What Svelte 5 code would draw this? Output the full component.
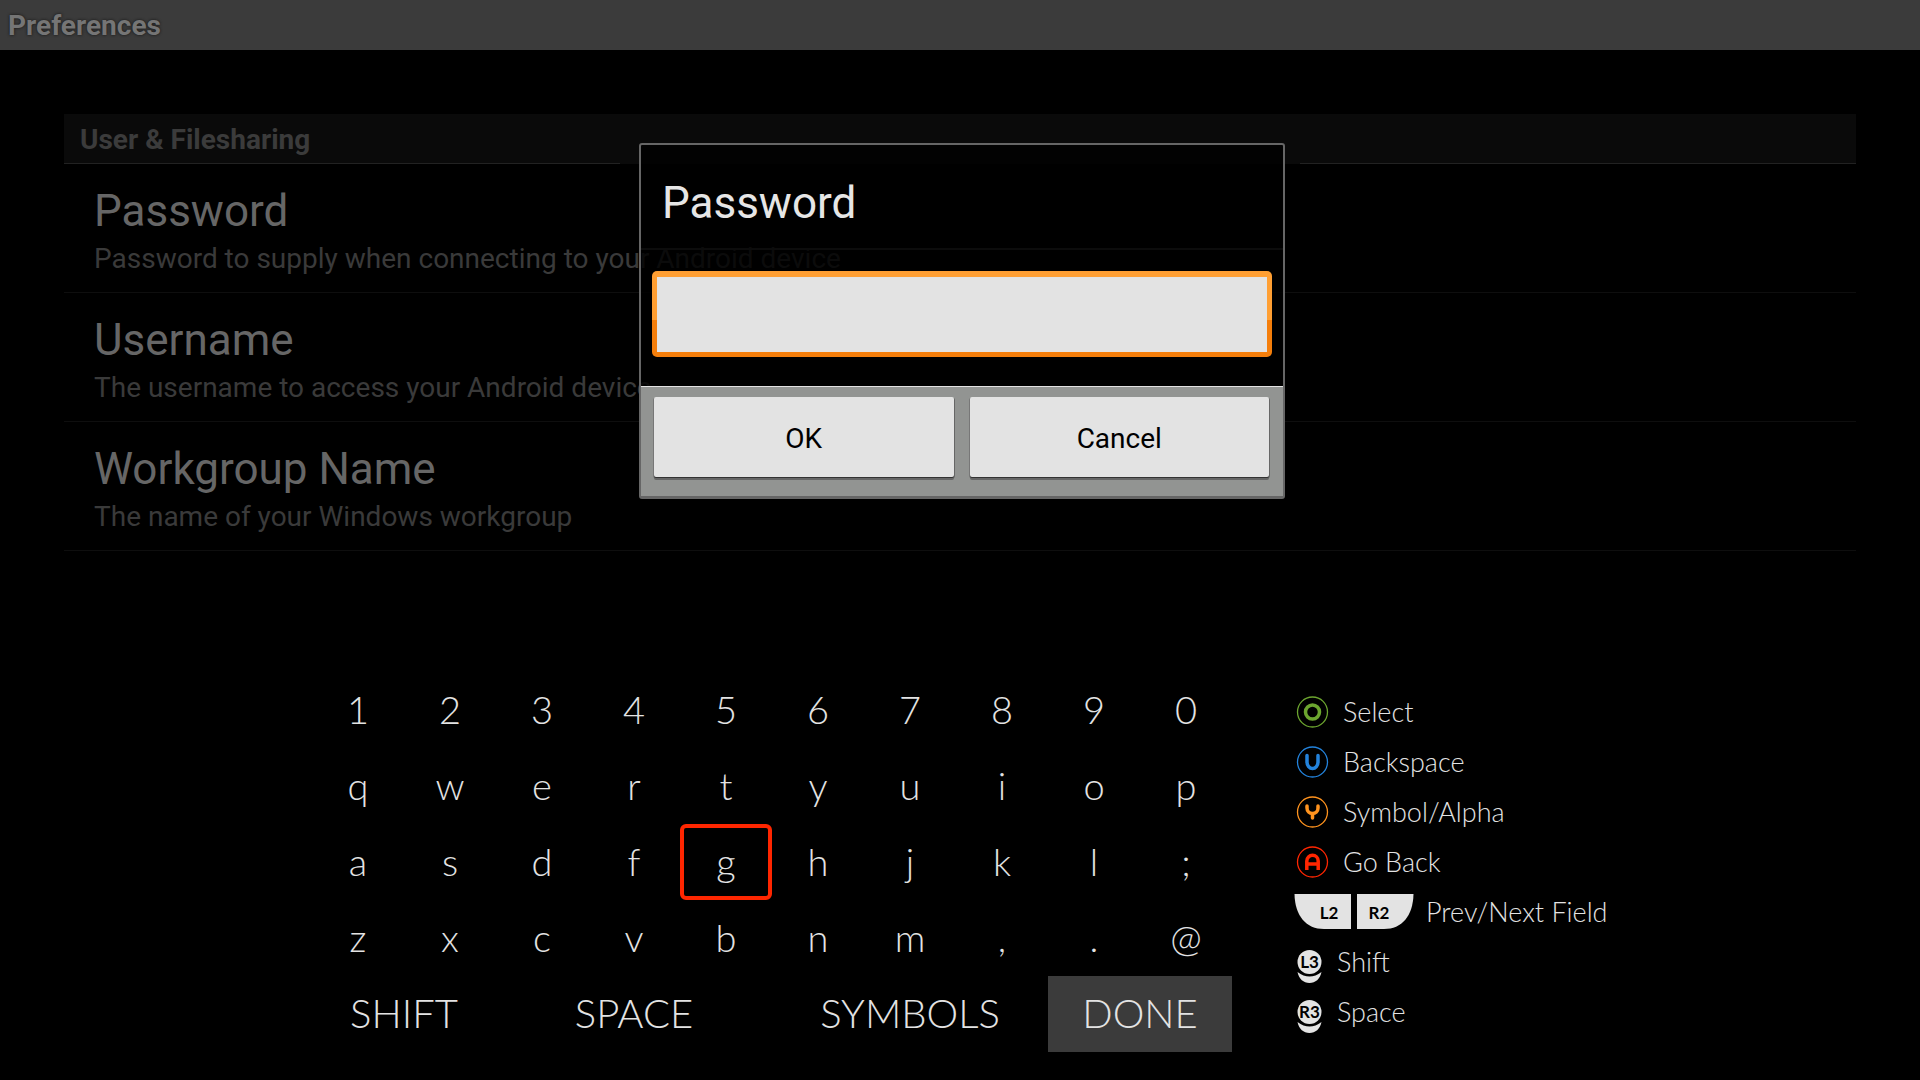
<script>
  const preferences = [
    { title: 'Password', summary: 'Password to supply when connecting to your Android device' },
    { title: 'Username', summary: 'The username to access your Android device' },
    { title: 'Workgroup Name', summary: 'The name of your Windows workgroup' }
  ];
  const keys = [...'1234567890', ...'qwertyuiop', ...'asdfghjkl;', ...'zxcvbnm,.@'];
  const actions = [
    { label: 'SHIFT' },
    { label: 'SPACE', wide: true },
    { label: 'SYMBOLS', wide: true },
    { label: 'DONE', filled: true }
  ];
  const hints = [
    { icon: 'o', label: 'Select' },
    { icon: 'u', label: 'Backspace' },
    { icon: 'y', label: 'Symbol/Alpha' },
    { icon: 'a', label: 'Go Back' },
    { icon: 'triggers', label: 'Prev/Next Field' },
    { icon: 'stick', text: 'L3', label: 'Shift' },
    { icon: 'stick', text: 'R3', label: 'Space' }
  ];

  let password = $state('');
  let selected = $state('g');
</script>

<div class="screen">
  <header class="bar">Preferences</header>

  <main class="prefs">
    <h2>User &amp; Filesharing</h2>
    {#each preferences as pref}
      <button class="pref" type="button">
        <span class="pref-title">{pref.title}</span>
        <span class="pref-summary">{pref.summary}</span>
      </button>
    {/each}
  </main>

  <section class="input-method">
    <div class="keyboard">
      {#each keys as key}
        <button class="key" class:selected={key === selected} type="button" onclick={() => (selected = key)}>{key}</button>
      {/each}
      {#each actions as action}
        <button class="key action" class:wide={action.wide} class:filled={action.filled} type="button">{action.label}</button>
      {/each}
    </div>

    <ul class="hints">
      {#each hints as hint}
        <li>
          {#if hint.icon === 'triggers'}
            <svg width="120" height="36" viewBox="0 0 120 36">
              <path fill="#e3e3e3" d="M0.500 0H57V35H30C12 35 1 22 0.500 0Z" />
              <path fill="#e3e3e3" d="M119.500 0H63V35H90C108 35 119 22 119.500 0Z" />
              <text x="35" y="25" class="cap">L2</text>
              <text x="85" y="25" class="cap">R2</text>
            </svg>
          {:else if hint.icon === 'stick'}
            <svg width="31" height="42" viewBox="0 -7 31 42">
              <circle cx="15.5" cy="14" r="12" fill="#e3e3e3" />
              <path fill="#e3e3e3" d="M3.5 24Q15.5 33 27.500 24C26 31 21.500 35 15.500 35S5 31 3.500 24Z" />
              <text x="15.5" y="20" class="cap">{hint.text}</text>
            </svg>
          {:else}
            <svg class={hint.icon} width="37" height="36" viewBox="0 0 37 36" fill="none" stroke="currentColor">
              <circle cx="18.500" cy="18" r="15" stroke-width="1.300" />
              {#if hint.icon === 'o'}
                <circle cx="18.500" cy="18" r="7" stroke-width="3.500" />
              {:else if hint.icon === 'u'}
                <path stroke-width="3.500" stroke-linecap="round" d="M13 11.500V18a5.500 6.500 0 0 0 11 0V11.500" />
              {:else if hint.icon === 'y'}
                <path stroke-width="3.500" stroke-linecap="round" d="M13 12V14a5.500 5.500 0 0 0 11 0V12M18.500 20V24" />
              {:else}
                <path stroke-width="3.500" d="M12.800 26V17a5.700 5.700 0 0 1 11.400 0V26M12.800 20H24.200" />
              {/if}
            </svg>
          {/if}
          <span>{hint.label}</span>
        </li>
      {/each}
    </ul>
  </section>

  <div class="overlay">
    <form class="dialog" role="dialog" aria-labelledby="dialog-title" onsubmit={(e) => e.preventDefault()}>
      <label id="dialog-title" for="password">Password</label>
      <div class="field">
        <input id="password" type="password" bind:value={password} />
      </div>
      <div class="buttons">
        <button type="submit">OK</button>
        <button type="button">Cancel</button>
      </div>
    </form>
  </div>
</div>

<style>
  :global(body) {
    background: #000;
  }

  .screen,
  .screen * {
    box-sizing: border-box;
  }

  .screen {
    position: relative;
    display: flex;
    flex-direction: column;
    min-height: 100vh;
    background: #000;
    font-family: Roboto, 'Liberation Sans', sans-serif;
  }

  button {
    margin: 0;
    border: 0;
    padding: 0;
    background: none;
    font-family: inherit;
    cursor: pointer;
  }

  .bar {
    padding: 9px 8px 8px;
    background: #3b3b3b;
    color: #757575;
    font-size: 28px;
    font-weight: 700;
    line-height: 33px;
    text-shadow: 0 0 3px #111;
  }

  .prefs {
    display: flex;
    flex-direction: column;
    margin: 64px 64px 0;
  }

  h2 {
    margin: 0;
    padding: 9px 16px 0;
    background: #0a0a0a;
    color: #3b3b3b;
    font-size: 28px;
    font-weight: 700;
    line-height: 33px;
  }

  h2::after {
    content: '';
    display: block;
    height: 1px;
    margin: 7px -16px 0;
    background: linear-gradient(90deg, #222 31%, transparent 31%, transparent 69%, #222 69%);
  }

  .pref {
    display: flex;
    flex-direction: column;
    border-bottom: 1px solid #0e0e0e;
    padding: 21px 30px 17px;
    text-align: left;
  }

  .pref-title {
    color: #666;
    font-size: 44px;
    line-height: 52px;
  }

  .pref-summary {
    margin-top: 5px;
    color: #3a3a3a;
    font-size: 28px;
    line-height: 33px;
  }

  .input-method {
    display: flex;
    justify-content: center;
    gap: 62px;
    margin-top: auto;
    padding: 48px 48px 28px;
    color: #e3e3e3;
    font-family: Lato, 'Open Sans', sans-serif;
    font-weight: 300;
  }

  .keyboard {
    display: grid;
    grid-template-columns: repeat(10, 92px);
    grid-auto-rows: 76px;
  }

  .key {
    padding-bottom: 2px;
    color: #e3e3e3;
    font-size: 38px;
    font-weight: 300;
    line-height: 46px;
  }

  .key.selected {
    border: 4px solid #ff2600;
    border-radius: 6px;
  }

  .action {
    grid-column: span 2;
    font-size: 40px;
  }

  .wide {
    grid-column: span 3;
  }

  .filled {
    background: #3b3b3b;
  }

  .hints {
    width: 314px;
    margin: 0;
    padding: 15px 0 0;
    list-style: none;
    font-size: 27px;
  }

  .hints li {
    display: flex;
    align-items: center;
    gap: 12px;
    height: 50px;
    white-space: nowrap;
  }

  .hints span {
    padding-bottom: 2px;
  }

  .hints svg {
    flex: none;
  }

  .cap {
    fill: #000;
    font-size: 17px;
    font-weight: 700;
    text-anchor: middle;
  }

  .o {
    color: #6ca52f;
  }

  .u {
    color: #2383dc;
  }

  .y {
    color: #ff931e;
  }

  .a {
    color: #ff2600;
  }

  .overlay {
    position: absolute;
    inset: 0;
    display: flex;
    align-items: flex-start;
    justify-content: center;
    padding: 143px 0 0 4px;
    pointer-events: none;
  }

  .dialog {
    width: 646px;
    border: 2px solid #666;
    border-bottom-width: 3px;
    border-radius: 3px;
    background: rgba(0, 0, 0, 0.8);
    pointer-events: auto;
  }

  .dialog label {
    display: block;
    border-bottom: 2px solid #0c0c0c;
    padding: 32px 21px 19px;
    color: #e6e6e6;
    font-size: 44px;
    line-height: 52px;
  }

  .field {
    display: flex;
    padding: 21px 11px 29px;
  }

  .field input {
    width: 100%;
    height: 86px;
    border: 5px solid transparent;
    border-top-width: 6px;
    border-radius: 5px;
    padding: 0 12px;
    outline: 0;
    background:
      linear-gradient(#e3e3e3, #e3e3e3) padding-box,
      linear-gradient(#ff9f33 57%, #f47e0b 57%) border-box;
    font-family: inherit;
    font-size: 36px;
  }

  .buttons {
    display: flex;
    gap: 16px;
    border-top: 1px solid #e3e3e3;
    padding: 10px 14px 19px 13px;
    background: #929492;
  }

  .buttons button {
    flex: 1;
    height: 80px;
    border-radius: 2px;
    padding-top: 2px;
    background: #e3e3e3;
    box-shadow: 0 1px 0 #333, 0 3px 0 #666, 1px 1px 0 #666, -1px 1px 0 #777;
    color: #000;
    font-size: 28px;
  }
</style>
